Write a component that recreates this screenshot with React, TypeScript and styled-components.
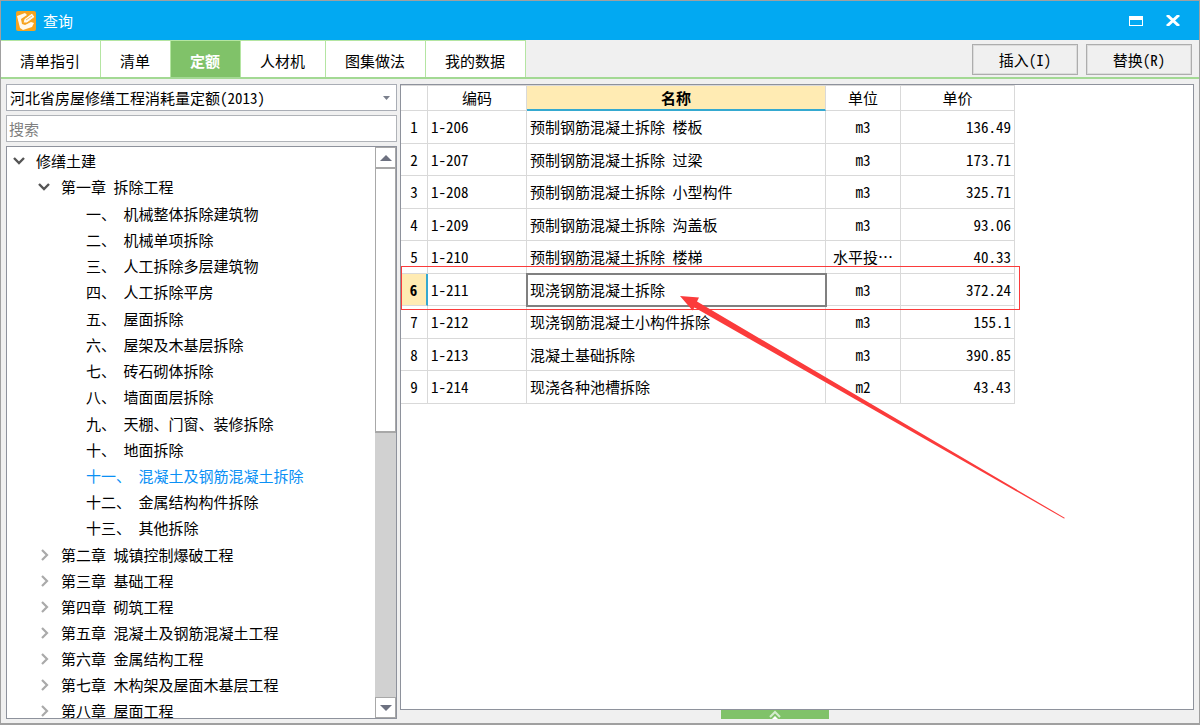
import React, { useState } from 'react';
import styled, { createGlobalStyle, css } from 'styled-components';

const GlobalStyle = createGlobalStyle`
  *, *::before, *::after { box-sizing: border-box; }
  body { margin: 0; }
  body, button, input, select, table {
    font-family: 'Noto Sans Mono CJK SC', 'Liberation Mono', 'Noto Sans CJK SC', monospace;
    font-size: 15px;
    line-height: 20px;
    color: #000;
  }
`;

const Window = styled.div`
  display: flex;
  flex-direction: column;
  height: 100vh;
  min-width: 800px;
  border: 1px solid #a0a0a0;
  border-bottom-width: 2px;
  background: #f0f0f0;
  overflow: hidden;
`;

const TitleBar = styled.header`
  display: flex;
  align-items: center;
  flex: none;
  height: 39px;
  padding: 0 11px 0 15px;
  gap: 7px;
  background: #02a9f2;
`;

const Title = styled.h1`
  flex: 1;
  margin: 0;
  font-size: 15px;
  font-weight: 400;
  color: #fff;
`;

const CaptionButton = styled.button`
  display: flex;
  align-items: center;
  justify-content: center;
  width: 30px;
  height: 30px;
  padding: 0;
  border: 0;
  background: none;
`;

const ToolBar = styled.div`
  display: flex;
  align-items: stretch;
  justify-content: space-between;
  flex: none;
  height: 39px;
  border-bottom: 2px solid #a3d994;
`;

const Tabs = styled.nav`
  display: flex;
  border-top: 1px solid #b4e5a2;
`;

const Tab = styled.button<{ $active?: boolean }>`
  padding: 4px 20px 0 19px;
  border: 0;
  border-right: 1px solid #b4e5a2;
  background: #fff;
  ${(p) =>
    p.$active &&
    css`
      background: #80c269;
      color: #fff;
      font-weight: 700;
    `}
`;

const Actions = styled.div`
  display: flex;
  gap: 8px;
  padding: 4px 7px 2px 0;
`;

const ActionButton = styled.button`
  width: 106px;
  border: 1px solid #adadad;
  background: #f0f0f0;
  box-shadow: inset 0 0 0 1px #dcdcdc;
`;

const Body = styled.main`
  display: grid;
  grid-template-columns: 391px minmax(0, 1fr);
  gap: 3px;
  flex: 1;
  min-height: 0;
  padding: 5px 5px 4px;
`;

const SidePane = styled.section`
  display: flex;
  flex-direction: column;
  gap: 4px;
  min-height: 0;
`;

const SelectBox = styled.div`
  display: flex;
  align-items: center;
  position: relative;
  flex: none;
`;

const Select = styled.select`
  appearance: none;
  width: 100%;
  height: 27px;
  padding: 0 24px 0 3px;
  border: 1px solid #a9adb5;
  border-radius: 0;
  background: #fff;
`;

const SelectArrow = styled.svg`
  position: absolute;
  right: 7px;
  pointer-events: none;
`;

const Search = styled.input`
  flex: none;
  width: 100%;
  height: 27px;
  padding: 0 2px;
  border: 1px solid #b0b3b8;
  &::placeholder { color: #808080; opacity: 1; }
`;

const TreePanel = styled.div`
  display: flex;
  flex: 1;
  min-height: 0;
  border: 1px solid #8e929c;
  background: #fff;
`;

const TreeScroll = styled.div`
  flex: 1;
  padding-top: 1px;
  overflow-y: auto;
  scrollbar-width: none;
`;

const TreeList = styled.ul`
  margin: 0;
  padding: 0;
  list-style: none;
`;

const LeafList = styled(TreeList)`
  padding-bottom: 1px;
  & > li:nth-child(4n + 1):not(:last-child) { padding-top: 1px; }
`;

const TreeRow = styled.div<{ $level: number; $selected?: boolean }>`
  display: flex;
  align-items: center;
  height: 26px;
  padding-left: ${(p) => 3 + p.$level * 25}px;
  gap: 9px;
  white-space: pre;
  color: ${(p) => (p.$selected ? '#0a90f5' : '#000')};
`;

const Twisty = styled.svg`
  flex: none;
  width: 17px;
  height: 12px;
`;

const TwistySpace = styled.span`
  flex: none;
  width: 17px;
`;

const ScrollBar = styled.div`
  display: flex;
  flex-direction: column;
  flex: none;
  width: 21px;
  background: #d1d1d1;
`;

const ScrollButton = styled.button`
  display: flex;
  align-items: center;
  justify-content: center;
  flex: none;
  height: 21px;
  padding: 0;
  border: 1px solid #a8a8a8;
  background: #fff;
`;

const ScrollTrack = styled.div`
  flex: 1;
`;

const ScrollThumb = styled.div`
  height: 50%;
  border: 1px solid #a8a8a8;
  border-bottom-width: 2px;
  background: #fff;
`;

const MainPane = styled.section`
  display: flex;
  flex-direction: column;
  min-width: 0;
  min-height: 0;
`;

const GridPanel = styled.div`
  position: relative;
  flex: 1;
  min-height: 0;
  border: 1px solid #8e929c;
  background: #fff;
`;

const Table = styled.table`
  width: 614px;
  table-layout: fixed;
  border-collapse: separate;
  border-spacing: 0;
`;

const Row = styled.tr`
  height: 33px;
  &:nth-child(even) { height: 32px; }
`;

const HeadCell = styled.th<{ $width: number; $active?: boolean }>`
  width: ${(p) => p.$width}px;
  height: 26px;
  padding: 0;
  border-top: 1px solid #d9d9d9;
  border-right: 1px solid #d9d9d9;
  border-bottom: 1px solid #d9d9d9;
  font-weight: 400;
  ${(p) =>
    p.$active &&
    css`
      background: #ffebb3;
      border-bottom: 2px solid #35a9d0;
      font-weight: 700;
    `}
`;

const RowHead = styled.th<{ $active?: boolean }>`
  padding: 0;
  border-right: 1px solid #d9d9d9;
  border-bottom: 1px solid #d9d9d9;
  font-weight: 400;
  ${(p) =>
    p.$active &&
    css`
      background: #ffebb3;
      border-right: 2px solid #35a9d0;
      font-weight: 700;
    `}
`;

const Cell = styled.td<{ $align?: string; $focused?: boolean }>`
  padding: 0 3px;
  border-right: 1px solid #d9d9d9;
  border-bottom: 1px solid #d9d9d9;
  text-align: ${(p) => p.$align ?? 'left'};
  white-space: nowrap;
  ${(p) =>
    p.$focused &&
    css`
      outline: 2px solid #808080;
      outline-offset: -1px;
    `}
`;

const Highlight = styled.div`
  position: absolute;
  left: 0;
  top: 181px;
  width: 619px;
  height: 44px;
  border: 1px solid #fb3b3b;
  pointer-events: none;
`;

const Arrow = styled.svg`
  position: absolute;
  left: 279px;
  top: 211px;
  pointer-events: none;
`;

const Handle = styled.button`
  display: flex;
  justify-content: center;
  align-self: center;
  flex: none;
  width: 108px;
  height: 9px;
  margin-right: 44px;
  padding: 0;
  border: 0;
  background: #80c269;
`;

const tabs = ['清单指引', '清单', '定额', '人材机', '图集做法', '我的数据'];

const sections = [
  '一、 机械整体拆除建筑物',
  '二、 机械单项拆除',
  '三、 人工拆除多层建筑物',
  '四、 人工拆除平房',
  '五、 屋面拆除',
  '六、 屋架及木基层拆除',
  '七、 砖石砌体拆除',
  '八、 墙面面层拆除',
  '九、 天棚、门窗、装修拆除',
  '十、 地面拆除',
  '十一、 混凝土及钢筋混凝土拆除',
  '十二、 金属结构构件拆除',
  '十三、 其他拆除',
];

const chapters = [
  '第二章 城镇控制爆破工程',
  '第三章 基础工程',
  '第四章 砌筑工程',
  '第五章 混凝土及钢筋混凝土工程',
  '第六章 金属结构工程',
  '第七章 木构架及屋面木基层工程',
  '第八章 屋面工程',
];

const rows = [
  ['1-206', '预制钢筋混凝土拆除 楼板', 'm3', '136.49'],
  ['1-207', '预制钢筋混凝土拆除 过梁', 'm3', '173.71'],
  ['1-208', '预制钢筋混凝土拆除 小型构件', 'm3', '325.71'],
  ['1-209', '预制钢筋混凝土拆除 沟盖板', 'm3', '93.06'],
  ['1-210', '预制钢筋混凝土拆除 楼梯', '水平投…', '40.33'],
  ['1-211', '现浇钢筋混凝土拆除', 'm3', '372.24'],
  ['1-212', '现浇钢筋混凝土小构件拆除', 'm3', '155.1'],
  ['1-213', '混凝土基础拆除', 'm3', '390.85'],
  ['1-214', '现浇各种池槽拆除', 'm2', '43.43'],
];

const Expanded = () => (
  <Twisty viewBox="0 0 17 12" aria-hidden="true">
    <path d="M4 3l5 5 5-5" fill="none" stroke="#555" strokeWidth="2.4" />
  </Twisty>
);

const Collapsed = () => (
  <Twisty viewBox="0 0 17 12" aria-hidden="true">
    <path d="M7 1l5 5-5 5" fill="none" stroke="#aaa" strokeWidth="2.2" />
  </Twisty>
);

export default function App() {
  const [tab, setTab] = useState('定额');
  const [section, setSection] = useState(sections[10]);

  return (
    <>
      <GlobalStyle />
      <Window lang="zh-CN">
        <TitleBar>
          <svg width="20" height="20" viewBox="0 0 20 20" aria-hidden="true">
            <rect width="20" height="20" rx="2" fill="#f6a31e" />
            <path d="M1 5l8-3 2 2-6 4 1 5 3 1 6-3 3 1-2 4-9 3-3-2z" fill="#fff8ea" />
            <path d="M7 12l1-4 8-6 3 4-8 6z" fill="#fff8ea" stroke="#f6a31e" strokeWidth="1" />
            <path d="M10 9l6-4" stroke="#f8bd62" strokeWidth="1" />
          </svg>
          <Title>查询</Title>
          <CaptionButton aria-label="最大化">
            <svg width="14" height="10" viewBox="0 0 14 10">
              <path d="M0 0h14v10H0zM1 4v5h12V4z" fill="#fff" fillRule="evenodd" />
            </svg>
          </CaptionButton>
          <CaptionButton aria-label="关闭">
            <svg width="14" height="11" viewBox="0 0 14 11">
              <path d="M1 0l12 11M13 0L1 11" stroke="#fff" strokeWidth="3" />
            </svg>
          </CaptionButton>
        </TitleBar>

        <ToolBar>
          <Tabs>
            {tabs.map((t) => (
              <Tab key={t} $active={t === tab} onClick={() => setTab(t)}>
                {t}
              </Tab>
            ))}
          </Tabs>
          <Actions>
            <ActionButton>插入(I)</ActionButton>
            <ActionButton>替换(R)</ActionButton>
          </Actions>
        </ToolBar>

        <Body>
          <SidePane>
            <SelectBox>
              <Select aria-label="定额库">
                <option>河北省房屋修缮工程消耗量定额(2013)</option>
              </Select>
              <SelectArrow width="7" height="4" viewBox="0 0 7 4" aria-hidden="true">
                <path d="M0 0h7L3.5 4z" fill="#7a7f8c" />
              </SelectArrow>
            </SelectBox>
            <Search type="text" placeholder="搜索" aria-label="搜索" />
            <TreePanel>
              <TreeScroll>
                <TreeList>
                  <li>
                    <TreeRow $level={0}>
                      <Expanded />
                      修缮土建
                    </TreeRow>
                    <TreeList>
                      <li>
                        <TreeRow $level={1}>
                          <Expanded />
                          第一章 拆除工程
                        </TreeRow>
                        <LeafList>
                          {sections.map((s) => (
                            <li key={s}>
                              <TreeRow $level={2} $selected={s === section} onClick={() => setSection(s)}>
                                <TwistySpace />
                                {s}
                              </TreeRow>
                            </li>
                          ))}
                        </LeafList>
                      </li>
                      {chapters.map((c) => (
                        <li key={c}>
                          <TreeRow $level={1}>
                            <Collapsed />
                            {c}
                          </TreeRow>
                        </li>
                      ))}
                    </TreeList>
                  </li>
                </TreeList>
              </TreeScroll>
              <ScrollBar>
                <ScrollButton aria-label="向上滚动">
                  <svg width="12" height="6" viewBox="0 0 12 6">
                    <path d="M0 6h12L6 0z" fill="#6d7180" />
                  </svg>
                </ScrollButton>
                <ScrollTrack>
                  <ScrollThumb />
                </ScrollTrack>
                <ScrollButton aria-label="向下滚动">
                  <svg width="12" height="6" viewBox="0 0 12 6">
                    <path d="M0 0h12L6 6z" fill="#6d7180" />
                  </svg>
                </ScrollButton>
              </ScrollBar>
            </TreePanel>
          </SidePane>

          <MainPane>
            <GridPanel>
              <Table>
                <thead>
                  <tr>
                    <HeadCell $width={27} />
                    <HeadCell $width={99} scope="col">编码</HeadCell>
                    <HeadCell $width={299} scope="col" $active>名称</HeadCell>
                    <HeadCell $width={75} scope="col">单位</HeadCell>
                    <HeadCell $width={114} scope="col">单价</HeadCell>
                  </tr>
                </thead>
                <tbody>
                  {rows.map(([code, name, unit, price], i) => (
                    <Row key={code}>
                      <RowHead scope="row" $active={i === 5}>{i + 1}</RowHead>
                      <Cell>{code}</Cell>
                      <Cell $focused={i === 5}>{name}</Cell>
                      <Cell $align="center">{unit}</Cell>
                      <Cell $align="right">{price}</Cell>
                    </Row>
                  ))}
                </tbody>
              </Table>
              <Highlight />
              <Arrow width="386" height="224" viewBox="0 0 386 224" aria-hidden="true">
                <path d="M0 0L19 1.5 17 5.5 385 222 384 222.500 14.5 11.5 12.5 14.5z" fill="#fb3b3b" />
              </Arrow>
            </GridPanel>
            <Handle aria-label="展开">
              <svg width="12" height="9" viewBox="0 0 12 9">
                <path d="M1 7l5-5 5 5" fill="none" stroke="#d5ecce" strokeWidth="2" />
                <path d="M3 9l3-3 3 3z" fill="#fff" />
              </svg>
            </Handle>
          </MainPane>
        </Body>
      </Window>
    </>
  );
}
